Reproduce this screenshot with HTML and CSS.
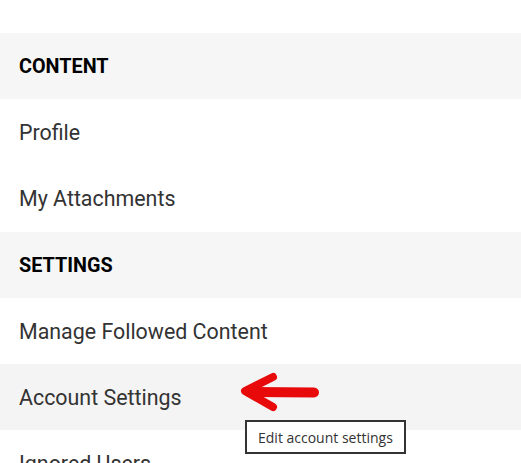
FILE: index.html
```html
<!DOCTYPE html>
<html>
<head>
<meta charset="utf-8">
<link rel="stylesheet" href="styles.css">
</head>
<body>
<div class="menu">
  <div class="section">CONTENT</div>
  <div class="item">Profile</div>
  <div class="item">My Attachments</div>
  <div class="section">SETTINGS</div>
  <div class="item">Manage Followed Content</div>
  <div class="item active">Account Settings
    <svg class="arrow" width="84" height="40" viewBox="0 0 84 40">
      <path d="M33 5 L5 19 L33 35" fill="none" stroke="#e8090b" stroke-width="8" stroke-linecap="round" stroke-linejoin="round"/>
      <path d="M9 20 L74 20.5" fill="none" stroke="#e8090b" stroke-width="10" stroke-linecap="round"/>
    </svg>
    <div class="tooltip">Edit account settings</div>
  </div>
  <div class="item">Ignored Users</div>
</div>
</body>
</html>
```
FILE: styles.css
```css
html, body {
  margin: 0;
  padding: 0;
  background: #fff;
  overflow: hidden;
  height: 463px;
}
.menu {
  padding-top: 33px;
  font-family: Roboto, "Liberation Sans", sans-serif;
}
.section {
  height: 66px;
  display: flex;
  align-items: center;
  padding-left: 19px;
  background: #f6f6f6;
  font-weight: bold;
  font-size: 19.8px;
  color: #000;
}
.section + .item + .item + .section {
  margin-top: 1px;
}
.item {
  position: relative;
  height: 66px;
  display: flex;
  align-items: center;
  padding-left: 19px;
  font-size: 21.4px;
  color: #333;
}
.item.active {
  background: #f4f4f4;
}
.arrow {
  position: absolute;
  left: 240px;
  top: 8px;
}
.tooltip {
  position: absolute;
  left: 245px;
  top: 56px;
  height: 30px;
  padding: 0 11px;
  border: 2px solid #333;
  background: #fff;
  font-family: "Open Sans", sans-serif;
  font-size: 14px;
  color: #333;
  display: flex;
  align-items: center;
  white-space: nowrap;
}
```
